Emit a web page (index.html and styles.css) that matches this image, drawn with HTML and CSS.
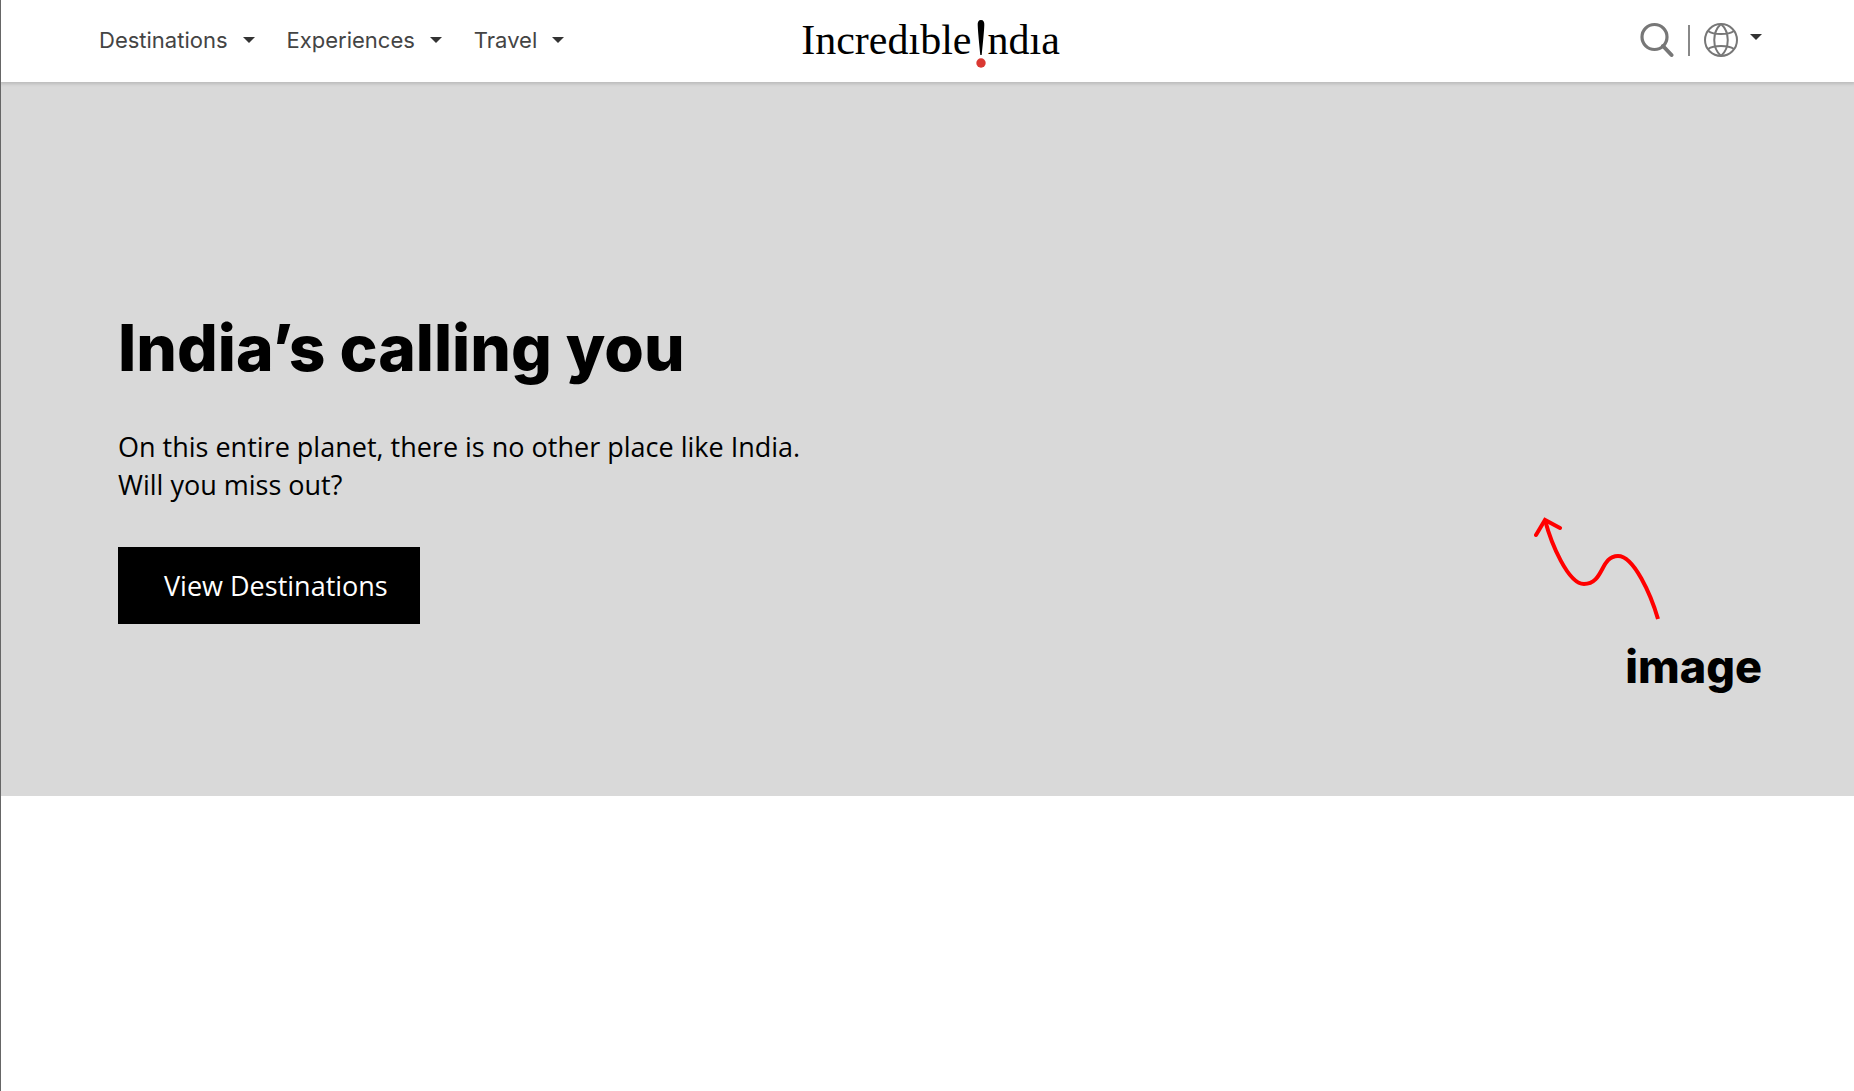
FILE: index.html
```html
<!DOCTYPE html>
<html lang="en">
<head>
<meta charset="utf-8">
<meta name="viewport" content="width=device-width, initial-scale=1">
<title>Incredible India</title>
<link rel="stylesheet" href="styles.css">
</head>
<body>
<header class="site-header">
  <nav class="menu" aria-label="Main">
    <button class="menu-item" type="button">Destinations <span class="caret"></span></button>
    <button class="menu-item" type="button">Experiences <span class="caret"></span></button>
    <button class="menu-item" type="button">Travel <span class="caret"></span></button>
  </nav>
  <a class="logo" href="#" aria-label="Incredible India">
    <span>Incredıble</span>
    <svg class="logo-mark" width="12" height="48" viewBox="0 0 12 48" aria-hidden="true">
      <path d="M6 0C3.500 0 2.500 2 2.700 5C3 13 4.300 25 5.300 35H6.700C7.700 25 9 13 9.300 5C9.500 2 8.500 0 6 0Z" fill="#000"/>
      <circle cx="6" cy="43" r="4.700" fill="#da3832"/>
    </svg>
    <span>ndıa</span>
  </a>
  <div class="tools">
    <button class="tool" type="button" aria-label="Search">
      <svg width="34" height="36" viewBox="0 0 34 36" fill="none" stroke="#777" aria-hidden="true">
        <circle cx="14.500" cy="15" r="12.500" stroke-width="3.200"/>
        <path d="M23 24L31.500 33" stroke-width="4" stroke-linecap="round"/>
      </svg>
    </button>
    <span class="divider"></span>
    <button class="tool language" type="button" aria-label="Language">
      <svg width="34" height="36" viewBox="0 0 34 36" fill="none" stroke="#777" stroke-width="2" aria-hidden="true">
        <circle cx="17" cy="18" r="16"/>
        <path d="M17 2C8 10 8 26 17 34M17 2C26 10 26 26 17 34M4 9C10 13 24 13 30 9M4 27C10 23 24 23 30 27"/>
      </svg>
      <span class="caret"></span>
    </button>
  </div>
</header>
<main class="hero">
  <section class="intro">
    <h1>India’s calling you</h1>
    <p>On this entire planet, there is no other place like India.<br>Will you miss out?</p>
    <a class="cta" href="#">View Destinations</a>
  </section>
  <aside class="note">
    <svg class="arrow" width="128" height="104" viewBox="0 0 128 104" fill="none" stroke="#f00" stroke-width="4" aria-hidden="true">
      <path d="M11 3C17 26 34 67 50 67C70 67 66 39 84 39C100 39 117 78 124 102"/>
      <path d="M2 18L11 3L26 11" stroke-linecap="round" stroke-linejoin="miter"/>
    </svg>
    <strong>image</strong>
  </aside>
</main>
</body>
</html>
```
FILE: styles.css
```css
* {
  box-sizing: border-box;
}

body {
  margin: 0;
  min-height: 100vh;
  border-left: 1px solid #666;
  background: #fff;
  color: #000;
  font-family: "Open Sans", sans-serif;
}

button {
  padding: 0;
  border: 0;
  background: none;
  cursor: pointer;
}

.site-header {
  position: relative;
  display: grid;
  grid-template-columns: 1fr auto 1fr;
  align-items: center;
  height: 82px;
  padding: 0 92px 2px 98px;
  background: #fff;
  box-shadow: 0 1px 3px 1px #bbb;
}

.menu {
  display: flex;
  gap: 32px;
}

.menu-item {
  display: flex;
  align-items: center;
  gap: 15px;
  color: #444;
  font: 400 22px/28px Inter, sans-serif;
}

.caret {
  border: 6px solid transparent;
  border-top-color: #333;
  border-bottom: 0;
}

.logo {
  display: flex;
  align-items: center;
  gap: 4px;
  color: #000;
  font: 42px/48px "Liberation Serif", serif;
  text-decoration: none;
}

.logo-mark {
  margin: 8px -4px 0 0;
}

.tools {
  display: flex;
  justify-content: flex-end;
  align-items: center;
  gap: 14px;
}

.tool {
  display: flex;
}

.divider {
  width: 2px;
  height: 31px;
  background: #888;
}

.language {
  gap: 12px;
}

.language .caret {
  margin-top: 12px;
}

.hero {
  display: flex;
  justify-content: space-between;
  min-height: 714px;
  padding: 221px 92px 100px 117px;
  background: #d9d9d9;
}

.intro h1 {
  margin: 0 0 35px;
  font: 800 64px/90px Inter, sans-serif;
}

.intro p {
  margin: 0 0 43px;
  font-size: 27px;
  line-height: 38px;
}

.cta {
  display: inline-block;
  padding: 20px 32px 20px 46px;
  background: #000;
  color: #fff;
  font-size: 27px;
  line-height: 37px;
  text-decoration: none;
}

.note {
  display: flex;
  flex-direction: column;
  align-items: flex-end;
  gap: 18px;
  padding-top: 214px;
}

.arrow {
  margin-right: 100px;
}

.note strong {
  font: 800 45px/56px Inter, sans-serif;
}
```
